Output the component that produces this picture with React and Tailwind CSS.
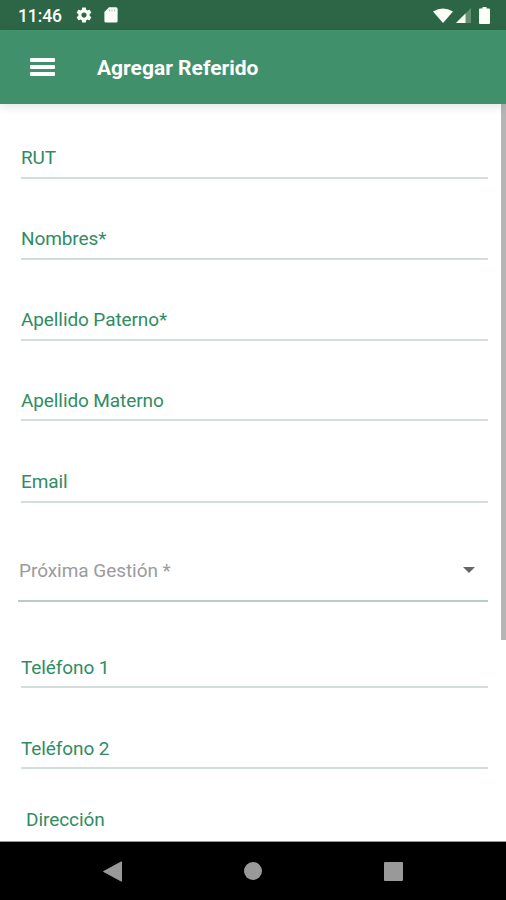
import React from 'react';

const personalFields = [
    { label: 'RUT', size: 'h-[75px] pb-[7px]' },
    { label: 'Nombres*', size: 'h-[81px] pb-[7px]' },
    { label: 'Apellido Paterno*', size: 'h-[81px] pb-[7px]' },
    { label: 'Apellido Materno', size: 'h-[80px] pb-[6px]' },
    { label: 'Email', size: 'h-[82px] pb-[7px]' },
];

const phoneFields = [
    { label: 'Teléfono 1', size: 'h-[86px] pb-[6px]' },
    { label: 'Teléfono 2', size: 'h-[81px] pb-[6px]' },
];

const StatusBar = () => (
    <div className="flex h-[30px] shrink-0 items-center bg-[#2d6646] pl-[18px] pr-[16px] text-[#fbfff8]">
        <span className="w-[57px] text-[17.5px] leading-[30px] font-medium tracking-[-0.1px] pt-[2px]">11:46</span>
        <svg className="h-[18px] w-[18px]" viewBox="0 0 24 24" fill="currentColor">
            <path d="M19.43 12.98c.04-.32.07-.64.07-.98s-.03-.66-.07-.98l2.11-1.65c.19-.15.24-.42.12-.64l-2-3.46c-.12-.22-.39-.3-.61-.22l-2.49 1c-.52-.4-1.08-.73-1.69-.98l-.38-2.65C14.46 2.18 14.25 2 14 2h-4c-.25 0-.46.18-.49.42l-.38 2.65c-.61.25-1.17.59-1.69.98l-2.49-1c-.23-.09-.49 0-.61.22l-2 3.46c-.13.22-.07.49.12.64l2.11 1.65c-.04.32-.07.65-.07.98s.03.66.07.98l-2.11 1.65c-.19.15-.24.42-.12.64l2 3.46c.12.22.39.3.61.22l2.49-1c.52.4 1.08.73 1.69.98l.38 2.65c.03.24.24.42.49.42h4c.25 0 .46-.18.49-.42l.38-2.65c.61-.25 1.17-.59 1.69-.98l2.49 1c.23.09.49 0 .61-.22l2-3.46c.12-.22.07-.49-.12-.64l-2.11-1.65zM12 15.5c-1.93 0-3.5-1.57-3.5-3.5s1.57-3.5 3.5-3.5 3.5 1.57 3.5 3.5-1.57 3.5-3.5 3.5z" />
        </svg>
        <svg className="ml-[11px] h-[16px] w-[14px]" viewBox="0 0 14 16">
            <path d="M5 0.3h7q1.6 0 1.6 1.6v12q0 1.6-1.6 1.6H2q-1.6 0-1.6-1.6V5z" fill="currentColor" />
            <path d="M5.4 2.4v2M8 2.4v2M10.6 2.4v2" stroke="#2d6646" strokeOpacity="0.4" strokeWidth="1.1" />
        </svg>
        <svg className="ml-auto h-[15px] w-[20px]" viewBox="0 0 20 16" preserveAspectRatio="none" fill="currentColor">
            <path d="M0 3.8Q10-2.9 20 3.8L10 16z" />
        </svg>
        <svg className="ml-[3px] h-[15px] w-[15px]" viewBox="0 0 15 15">
            <path d="M15 0v15H0z" fill="#63916f" />
            <path d="M9.5 5.5V15H0z" fill="currentColor" />
        </svg>
        <svg className="ml-[8px] h-[17px] w-[11px]" viewBox="0 0 11 17" fill="currentColor">
            <path d="M3.5 0h4v1.6H10q1 0 1 1V16q0 1-1 1H1q-1 0-1-1V2.6q0-1 1-1h2.5z" />
        </svg>
    </div>
);

const AppBar = () => (
    <header className="relative z-10 flex h-[74px] shrink-0 items-center bg-[#41906c] pl-[30px] shadow-[0_3px_9px_rgba(0,0,0,0.1)]">
        <button className="flex w-[25px] flex-col gap-[3px]" aria-label="Menu">
            <span className="h-[4px] w-full rounded-[1px] bg-white" />
            <span className="h-[4px] w-full rounded-[1px] bg-white" />
            <span className="h-[4px] w-full rounded-[1px] bg-white" />
        </button>
        <h1 className="ml-[42px] pt-[2px] text-[21px] leading-[28px] font-bold text-white">Agregar Referido</h1>
    </header>
);

const Field = ({ label, size }) => (
    <div className={`ml-[3px] flex items-end border-b-2 border-[#d3dddb] ${size}`}>
        <label className="text-[19px] leading-[24px] tracking-[-0.1px] text-[#2f8c63]">{label}</label>
    </div>
);

export default function App() {
    return (
        <div className="flex h-[900px] w-[506px] flex-col overflow-hidden bg-white font-['Roboto',sans-serif]">
            <StatusBar />
            <AppBar />
            <main className="flex min-h-0 flex-1 border-b border-[#999999]">
                <form className="ml-[18px] w-[470px]">
                    {personalFields.map((field) => (
                        <Field key={field.label} label={field.label} size={field.size} />
                    ))}
                    <div className="flex h-[99px] items-end justify-between border-b-2 border-[#b9cdc8] pr-[13px] pb-[17px]">
                        <span className="pl-px text-[19px] leading-[24px] tracking-[-0.05px] text-[#9b9b9b]">Próxima Gestión *</span>
                        <svg className="mb-[10px] h-[6px] w-[12px]" viewBox="0 0 12 6" fill="#666666">
                            <path d="M0 0h12L6 6z" />
                        </svg>
                    </div>
                    {phoneFields.map((field) => (
                        <Field key={field.label} label={field.label} size={field.size} />
                    ))}
                    <div className="pt-[39px] pl-[8px]">
                        <label className="block text-[19px] leading-[24px] tracking-[-0.05px] text-[#2f8c63]">Dirección</label>
                    </div>
                </form>
                <div className="ml-auto h-[536px] w-[5px] bg-[#b5b5b5]" />
            </main>
            <nav className="flex h-[58px] shrink-0 items-center bg-black pl-[103px] text-[#999999]">
                <svg className="h-[21px] w-[19px]" viewBox="0 0 19 21" fill="currentColor">
                    <path d="M18.5 0.8v19.4L0.5 10.5z" stroke="currentColor" strokeLinejoin="round" />
                </svg>
                <span className="ml-[122px] h-[18px] w-[18px] rounded-full bg-[#999999]" />
                <span className="ml-[122px] h-[19px] w-[19px] rounded-[1px] bg-[#999999]" />
            </nav>
        </div>
    );
}
